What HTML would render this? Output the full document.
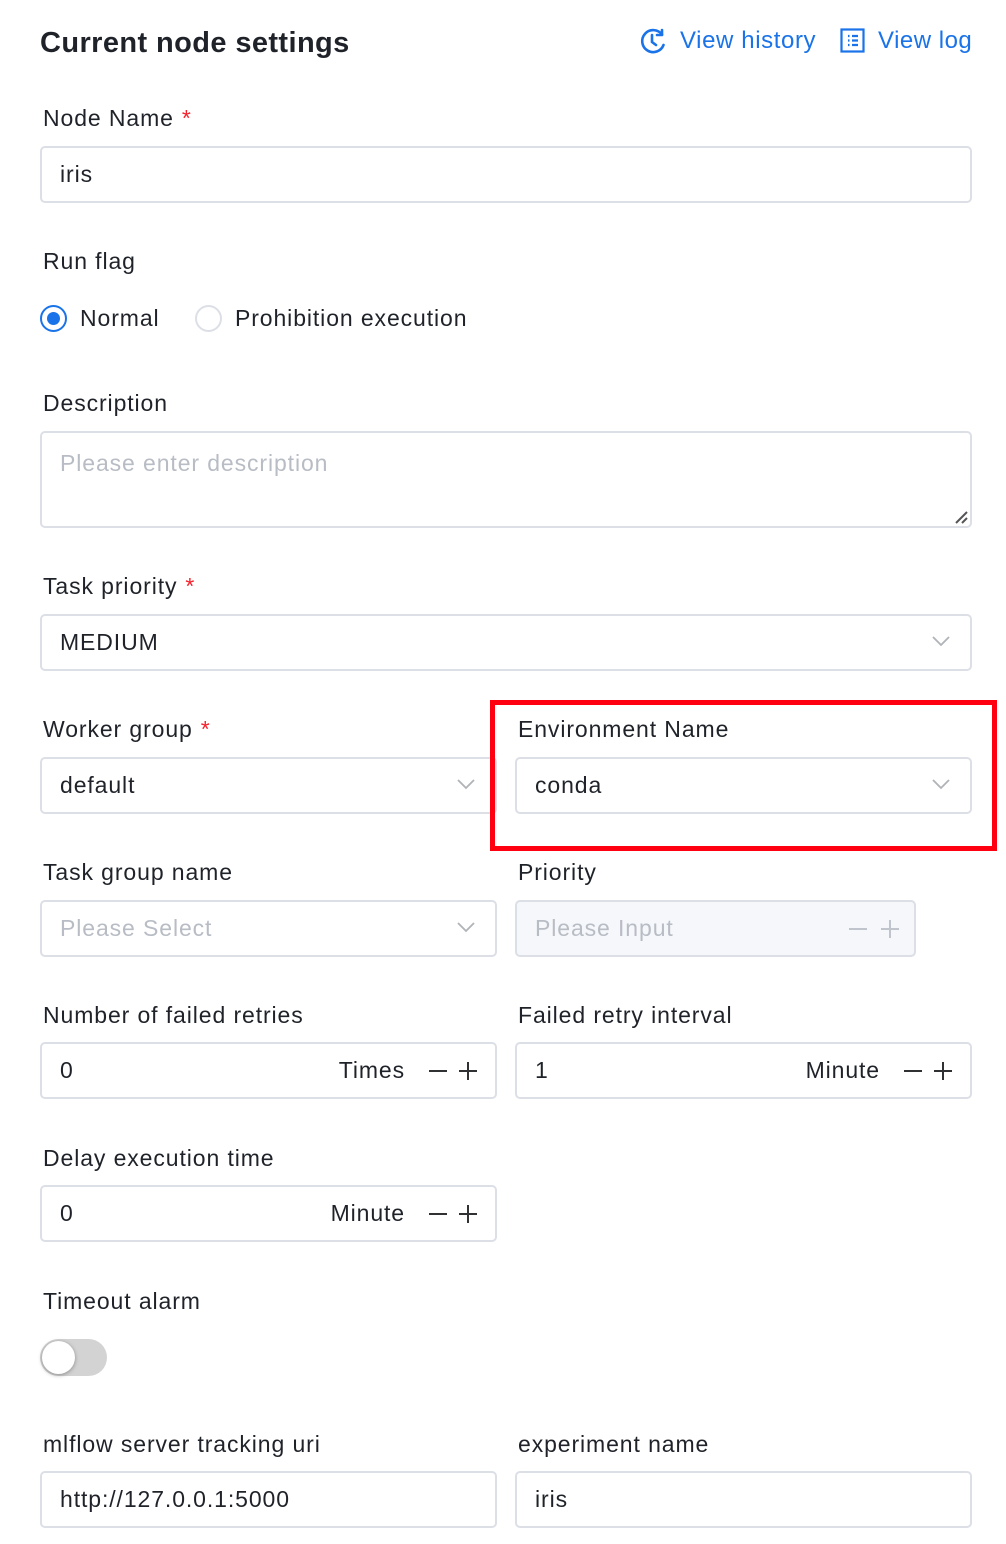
<!DOCTYPE html>
<html><head><meta charset="utf-8"><style>
*{box-sizing:border-box;margin:0;padding:0}
body{width:1006px;height:1544px;background:#fff;position:relative;font-family:"Liberation Sans",sans-serif;color:#1f2329;overflow:hidden}
.a{position:absolute;white-space:nowrap}
.lbl{font-size:23px;letter-spacing:0.9px;line-height:28px}
.lbl b{color:#f5222d;font-weight:normal;margin-left:8px}
.inp{position:absolute;height:57px;border:2px solid #dcdfe6;border-radius:5px;background:#fff;font-size:23px;letter-spacing:0.9px;line-height:53px;padding-left:18px}
.dis{background:#f5f7fa;color:#b8bcc4}
.ph{color:#b8bcc4}
.chev{position:absolute;right:20px;top:19px}
.suf{position:absolute;top:0}
</style></head><body>
<div class="a" style="left:40px;top:24px;font-size:29px;font-weight:600;line-height:38px;letter-spacing:0.4px">Current node settings</div>
<svg class="a" style="left:639px;top:27px" width="28" height="28" viewBox="0 0 28 28" fill="none" stroke="#1a73e8" stroke-width="2.6" stroke-linecap="round"><path d="M23 7.5A11 11 0 1 0 24.5 18"/><path d="M23 3v5h-5" stroke-linejoin="round"/><path d="M13 8v7l4 3"/></svg>
<div class="a" style="left:680px;top:26px;font-size:24px;color:#1a73e8;line-height:30px;letter-spacing:0.6px">View history</div>
<svg class="a" style="left:840px;top:28px" width="25" height="25" viewBox="0 0 25 25" fill="none" stroke="#1a73e8" stroke-width="2.2"><rect x="1.5" y="1.5" width="22" height="22"/><path d="M8 8h1.5M8 12.5h1.5M8 17h1.5M12 8h6M12 12.5h6M12 17h6"/></svg>
<div class="a" style="left:878px;top:26px;font-size:24px;color:#1a73e8;line-height:30px;letter-spacing:0.5px">View log</div>

<div class="a lbl" style="left:43px;top:104px">Node Name<b>*</b></div>
<div class="inp" style="left:40px;top:146px;width:932px">iris</div>

<div class="a lbl" style="left:43px;top:247px">Run flag</div>
<div class="a" style="left:40px;top:305px;width:27px;height:27px;border-radius:50%;border:2px solid #1a73e8"><div style="position:absolute;left:5px;top:5px;width:13px;height:13px;border-radius:50%;background:#1a73e8"></div></div>
<div class="a lbl" style="left:80px;top:304px">Normal</div>
<div class="a" style="left:195px;top:305px;width:27px;height:27px;border-radius:50%;border:2px solid #dcdfe6"></div>
<div class="a lbl" style="left:235px;top:304px">Prohibition execution</div>

<div class="a lbl" style="left:43px;top:389px">Description</div>
<div class="inp" style="left:40px;top:431px;width:932px;height:97px;line-height:60px"><span class="ph">Please enter description</span>
<svg style="position:absolute;right:1px;bottom:1px" width="16" height="16"><path d="M3 14L14 3M9 14L14 9" stroke="#555" stroke-width="2"/></svg></div>

<div class="a lbl" style="left:43px;top:572px">Task priority<b>*</b></div>
<div class="inp" style="left:40px;top:614px;width:932px">MEDIUM<svg class="chev" width="18" height="12"><path d="M1 2l8 8 8-8" stroke="#b0b3b8" stroke-width="1.8" fill="none"/></svg></div>

<div class="a lbl" style="left:43px;top:715px">Worker group<b>*</b></div>
<div class="inp" style="left:40px;top:757px;width:457px">default<svg class="chev" width="18" height="12"><path d="M1 2l8 8 8-8" stroke="#b0b3b8" stroke-width="1.8" fill="none"/></svg></div>
<div class="a lbl" style="left:518px;top:715px">Environment Name</div>
<div class="inp" style="left:515px;top:757px;width:457px">conda<svg class="chev" width="18" height="12"><path d="M1 2l8 8 8-8" stroke="#b0b3b8" stroke-width="1.8" fill="none"/></svg></div>
<div class="a" style="left:490px;top:700px;width:507px;height:151px;border:5px solid #ff0011"></div>

<div class="a lbl" style="left:43px;top:858px">Task group name</div>
<div class="inp" style="left:40px;top:900px;width:457px"><span class="ph">Please Select</span><svg class="chev" width="18" height="12"><path d="M1 2l8 8 8-8" stroke="#b0b3b8" stroke-width="1.8" fill="none"/></svg></div>
<div class="a lbl" style="left:518px;top:858px">Priority</div>
<div class="inp dis" style="left:515px;top:900px;width:401px">Please Input
<svg style="position:absolute;left:330px;top:17px" width="54" height="20" stroke="#c0c4cc" stroke-width="2"><path d="M2 10h18M34 10h18M43 1v18"/></svg></div>

<div class="a lbl" style="left:43px;top:1001px">Number of failed retries</div>
<div class="inp" style="left:40px;top:1042px;width:457px">0<span class="suf" style="right:90px">Times</span>
<svg style="position:absolute;right:16px;top:17px" width="52" height="20" stroke="#303133" stroke-width="2"><path d="M2 10h18M32 10h18M41 1v18"/></svg></div>
<div class="a lbl" style="left:518px;top:1001px">Failed retry interval</div>
<div class="inp" style="left:515px;top:1042px;width:457px">1<span class="suf" style="right:90px">Minute</span>
<svg style="position:absolute;right:16px;top:17px" width="52" height="20" stroke="#303133" stroke-width="2"><path d="M2 10h18M32 10h18M41 1v18"/></svg></div>

<div class="a lbl" style="left:43px;top:1144px">Delay execution time</div>
<div class="inp" style="left:40px;top:1185px;width:457px">0<span class="suf" style="right:90px">Minute</span>
<svg style="position:absolute;right:16px;top:17px" width="52" height="20" stroke="#303133" stroke-width="2"><path d="M2 10h18M32 10h18M41 1v18"/></svg></div>

<div class="a lbl" style="left:43px;top:1287px">Timeout alarm</div>
<div class="a" style="left:40px;top:1339px;width:67px;height:37px;border-radius:19px;background:#d3d3d3"><div style="position:absolute;left:2px;top:2px;width:33px;height:33px;border-radius:50%;background:#fff;box-shadow:0 1px 4px rgba(0,0,0,.35)"></div></div>

<div class="a lbl" style="left:43px;top:1430px">mlflow server tracking uri</div>
<div class="inp" style="left:40px;top:1471px;width:457px">http://127.0.0.1:5000</div>
<div class="a lbl" style="left:518px;top:1430px">experiment name</div>
<div class="inp" style="left:515px;top:1471px;width:457px">iris</div>
</body></html>
